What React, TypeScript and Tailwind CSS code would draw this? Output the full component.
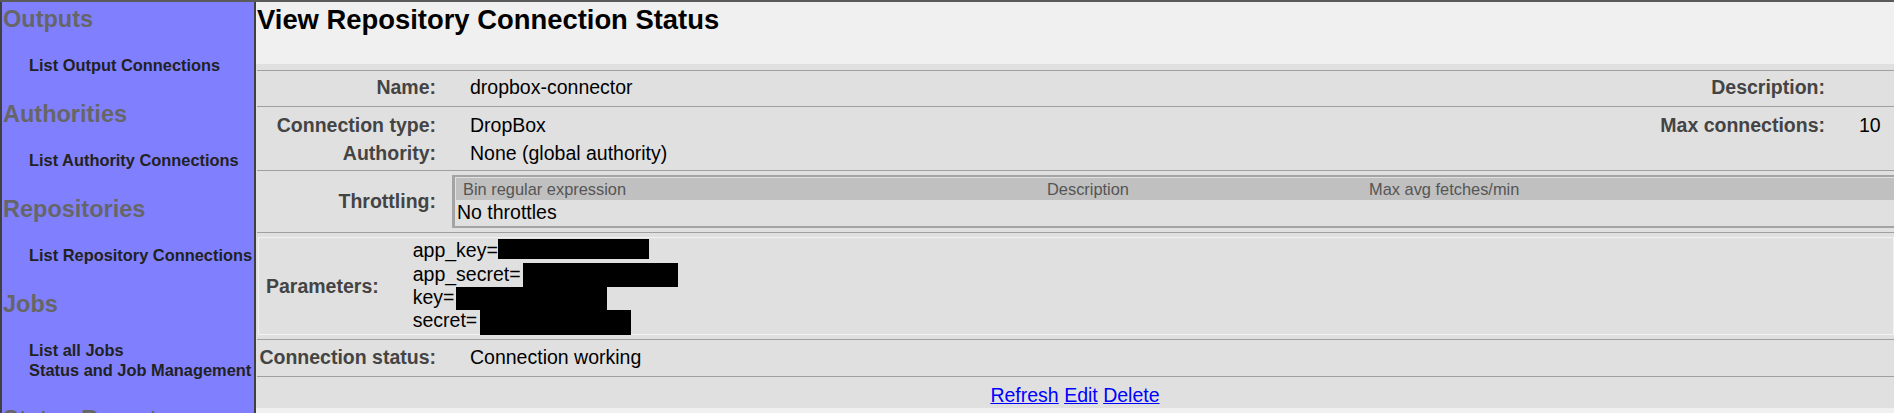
import React from 'react';

const nav = [
  { title: 'Outputs', links: ['List Output Connections'] },
  { title: 'Authorities', links: ['List Authority Connections'] },
  { title: 'Repositories', links: ['List Repository Connections'] },
  { title: 'Jobs', links: ['List all Jobs', 'Status and Job Management'] },
  { title: 'Status Reports', links: ['Document Status', 'Queue Status'] },
];

function Sep() {
  return <div className="ml-[1px] h-px bg-[#a0a0a0]" />;
}

function Label({ children }: { children: React.ReactNode }) {
  return <div className="font-bold text-[#444] text-right whitespace-nowrap">{children}</div>;
}

export default function App() {
  return (
    <div
      className="flex h-screen overflow-hidden border-t-2 border-[#5a5a5a] bg-[#f0f0f0] text-black"
      style={{ fontFamily: '"Liberation Sans", Arial, sans-serif' }}
    >
      {/* left navigation */}
      <div className="w-[256px] shrink-0 bg-[#8080ff] border-l-2 border-r-2 border-[#404040] pt-[3px]">
        {nav.map((s, i) => (
          <div key={s.title} className={i === 0 ? '' : 'mt-[25px]'}>
            <div className="pl-[1px] text-[23.5px] leading-[28px] font-bold text-[#666]">{s.title}</div>
            <div className="mt-[22px] pl-[27px] text-[16.4px] leading-[20px] font-bold text-[#222] whitespace-nowrap">
              {s.links.map((l) => (
                <div key={l}>{l}</div>
              ))}
            </div>
          </div>
        ))}
      </div>

      {/* main */}
      <div className="flex-1 min-w-0 flex flex-col">
        <div className="h-[62px] pt-[2px] pl-[1px] text-[27.4px] leading-[32px] font-bold">
          View Repository Connection Status
        </div>

        <div className="bg-[#e0e0e0] text-[19.5px] leading-[23px] pt-[6px]">
          <Sep />
          {/* name */}
          <div className="flex h-[35px] pt-[5px]">
            <div className="w-[180px]"><Label>Name:</Label></div>
            <div className="ml-[34px] flex-1">dropbox-connector</div>
            <Label>Description:</Label>
            <div className="ml-[34px] w-[35px]" />
          </div>
          <Sep />
          {/* type + authority */}
          <div className="h-[63px] pt-[7px]">
            <div className="flex">
              <div className="w-[180px]"><Label>Connection type:</Label></div>
              <div className="ml-[34px] flex-1">DropBox</div>
              <Label>Max connections:</Label>
              <div className="ml-[34px] w-[35px]">10</div>
            </div>
            <div className="flex mt-[5px]">
              <div className="w-[180px]"><Label>Authority:</Label></div>
              <div className="ml-[34px] flex-1">None (global authority)</div>
            </div>
          </div>
          <Sep />
          {/* throttling */}
          <div className="flex items-center h-[61px]">
            <div className="w-[180px]"><Label>Throttling:</Label></div>
            <div className="ml-[16px] flex-1 border-l-[3px] border-t-2 border-b-2 border-[#a4a4a4] pt-px pl-px">
              <div className="flex h-[22px] bg-[#c0c0c0] text-[16.4px] leading-[22px] text-[#555]">
                <div className="w-[584px] pl-[7px]">Bin regular expression</div>
                <div className="w-[322px] pl-[7px]">Description</div>
                <div className="flex-1 pl-[7px]">Max avg fetches/min</div>
              </div>
              <div className="h-[26px] pt-px pl-px">No throttles</div>
            </div>
          </div>
          <Sep />
          {/* parameters */}
          <div className="py-[4px] pl-[2px]">
            <div className="flex items-center h-[98px] border border-[#f2f2f2]">
              <div className="pl-[7px] font-bold text-[#444]">Parameters:</div>
              <div className="ml-[34px] leading-[23.3px]">
                <div className="flex items-start h-[23.3px]">
                  <span>app_key=</span>
                  <span className="w-[151px] h-[20px] bg-black" />
                </div>
                <div className="flex items-start h-[23.3px]">
                  <span>app_secret=</span>
                  <span className="ml-[2px] w-[155px] h-[24px] bg-black" />
                </div>
                <div className="flex items-start h-[23.3px]">
                  <span>key=</span>
                  <span className="ml-[2px] mt-px w-[151px] h-[23px] bg-black" />
                </div>
                <div className="flex items-start h-[23.3px]">
                  <span>secret=</span>
                  <span className="ml-[3px] mt-px w-[151px] h-[25px] bg-black" />
                </div>
              </div>
            </div>
          </div>
          <Sep />
          {/* status */}
          <div className="flex h-[36px] pt-[6px]">
            <div className="w-[180px]"><Label>Connection status:</Label></div>
            <div className="ml-[34px] flex-1">Connection working</div>
          </div>
          <Sep />
          {/* actions */}
          <div className="h-[31px] pt-[7px] text-center">
            <a href="#" className="text-[#0000ff] underline">Refresh</a>{' '}
            <a href="#" className="text-[#0000ff] underline">Edit</a>{' '}
            <a href="#" className="text-[#0000ff] underline">Delete</a>
          </div>
        </div>
      </div>
    </div>
  );
}
